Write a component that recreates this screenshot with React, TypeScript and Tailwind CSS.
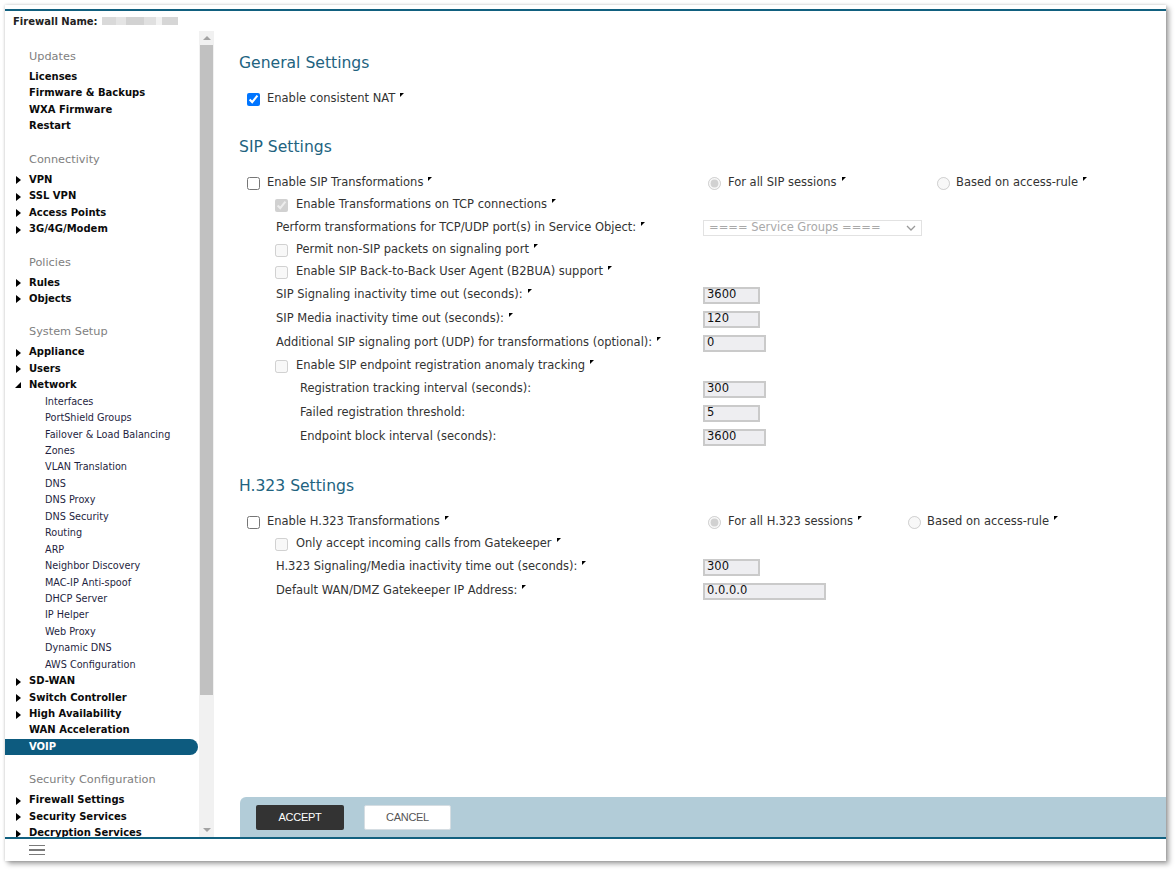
import React from 'react';

type NavItem = {
  label: string;
  arrow?: 'right' | 'down';
  sub?: boolean;
  active?: boolean;
};

type NavSection = {
  title: string;
  items: NavItem[];
};

const nav: NavSection[] = [
  {
    title: 'Updates',
    items: [
      { label: 'Licenses' },
      { label: 'Firmware & Backups' },
      { label: 'WXA Firmware' },
      { label: 'Restart' },
    ],
  },
  {
    title: 'Connectivity',
    items: [
      { label: 'VPN', arrow: 'right' },
      { label: 'SSL VPN', arrow: 'right' },
      { label: 'Access Points', arrow: 'right' },
      { label: '3G/4G/Modem', arrow: 'right' },
    ],
  },
  {
    title: 'Policies',
    items: [
      { label: 'Rules', arrow: 'right' },
      { label: 'Objects', arrow: 'right' },
    ],
  },
  {
    title: 'System Setup',
    items: [
      { label: 'Appliance', arrow: 'right' },
      { label: 'Users', arrow: 'right' },
      { label: 'Network', arrow: 'down' },
      { label: 'Interfaces', sub: true },
      { label: 'PortShield Groups', sub: true },
      { label: 'Failover & Load Balancing', sub: true },
      { label: 'Zones', sub: true },
      { label: 'VLAN Translation', sub: true },
      { label: 'DNS', sub: true },
      { label: 'DNS Proxy', sub: true },
      { label: 'DNS Security', sub: true },
      { label: 'Routing', sub: true },
      { label: 'ARP', sub: true },
      { label: 'Neighbor Discovery', sub: true },
      { label: 'MAC-IP Anti-spoof', sub: true },
      { label: 'DHCP Server', sub: true },
      { label: 'IP Helper', sub: true },
      { label: 'Web Proxy', sub: true },
      { label: 'Dynamic DNS', sub: true },
      { label: 'AWS Configuration', sub: true },
      { label: 'SD-WAN', arrow: 'right' },
      { label: 'Switch Controller', arrow: 'right' },
      { label: 'High Availability', arrow: 'right' },
      { label: 'WAN Acceleration' },
      { label: 'VOIP', active: true },
    ],
  },
  {
    title: 'Security Configuration',
    items: [
      { label: 'Firewall Settings', arrow: 'right' },
      { label: 'Security Services', arrow: 'right' },
      { label: 'Decryption Services', arrow: 'right' },
    ],
  },
];

const Tip = () => (
  <span className="inline-block ml-[5px] w-0 h-0 border-t-[4px] border-r-[4px] border-t-black border-r-transparent -translate-y-[4px]" />
);

const Field = ({ value, width }: { value: string; width: string }) => (
  <div className={`${width} h-[17px] border-2 border-[#cacaca] bg-[#eeeef1] flex items-center pl-[2px] text-[#111]`}>
    {value}
  </div>
);

const rowHeights = {
  sm: 'flex items-center h-[22px]',
  md: 'flex items-center h-[23px]',
  lg: 'flex items-center h-[24px]',
};

const Row = ({
  size = 'sm',
  left,
  right,
}: {
  size?: 'sm' | 'md' | 'lg';
  left: React.ReactNode;
  right?: React.ReactNode;
}) => (
  <div className={rowHeights[size]}>
    <div className="w-[464px] flex items-center whitespace-nowrap">{left}</div>
    <div className="flex items-center whitespace-nowrap">{right}</div>
  </div>
);

const SectionTitle = ({ children, first }: { children: React.ReactNode; first?: boolean }) => (
  <h2 className={`${first ? '' : 'mt-[27px]'} mb-[15px] h-[20px] leading-[20px] text-[15.6px] text-[#22637f]`}>{children}</h2>
);

const Sidebar = () => (
  <div className="w-[194px] overflow-hidden pt-[1px]">
    {nav.map((section) => (
      <div key={section.title}>
        <div className="h-[37px] pt-[16px] pl-[24px] leading-[17px] text-[11.3px] text-[#808080]">{section.title}</div>
        {section.items.map((item) => (
          <div
            key={item.label}
            className={
              item.active
                ? 'relative h-[16.45px] leading-[16.45px] w-[193px] rounded-r-[9px] bg-[#0d5b7f] pl-[24px] text-[10px] font-bold text-white'
                : item.sub
                ? 'relative h-[16.45px] leading-[16.45px] pl-[40px] text-[9.7px] text-[#1f1f3f]'
                : 'relative h-[16.45px] leading-[16.45px] pl-[24px] text-[10px] font-bold text-[#0b0b0b]'
            }
          >
            {item.arrow === 'right' && (
              <span className="absolute left-[11px] top-[4.5px] w-0 h-0 border-y-[4px] border-y-transparent border-l-[5px] border-l-black" />
            )}
            {item.arrow === 'down' && (
              <span className="absolute left-[10px] top-[5px] w-0 h-0 border-b-[6px] border-l-[6px] border-l-transparent border-b-black" />
            )}
            {item.label}
          </div>
        ))}
      </div>
    ))}
  </div>
);

const Scrollbar = () => (
  <div className="w-[15px] bg-[#f1f1f1] flex flex-col">
    <div className="h-[14px] flex items-center justify-center">
      <span className="w-0 h-0 border-x-[4px] border-x-transparent border-b-[4px] border-b-[#a3a3a3]" />
    </div>
    <div className="h-[650px] mx-[1px] bg-[#c1c1c1]" />
    <div className="flex-1" />
    <div className="h-[14px] flex items-center justify-center">
      <span className="w-0 h-0 border-x-[4px] border-x-transparent border-t-[4px] border-t-[#a3a3a3]" />
    </div>
  </div>
);

const Check = ({ checked, disabled }: { checked?: boolean; disabled?: boolean }) => (
  <input type="checkbox" className="w-[13px] h-[13px] shrink-0" defaultChecked={checked} disabled={disabled} />
);

const Radios = ({ name, label, firstWidth }: { name: string; label: string; firstWidth: string }) => (
  <div className="flex items-center pl-[5px]">
    <div className={`${firstWidth} flex items-center`}>
      <input type="radio" name={name} className="w-[13px] h-[13px]" defaultChecked disabled />
      <span className="ml-[7px]">{label}</span>
      <Tip />
    </div>
    <input type="radio" name={name} className="w-[13px] h-[13px]" disabled />
    <span className="ml-[6px]">Based on access-rule</span>
    <Tip />
  </div>
);

const Settings = () => (
  <div className="flex-1 pl-[25px] pt-[22px] text-[11.5px] text-[#333]">
    <SectionTitle first>General Settings</SectionTitle>
    <Row
      left={
        <div className="flex items-center pl-[8px]">
          <Check checked />
          <span className="ml-[7px]">Enable consistent NAT</span>
          <Tip />
        </div>
      }
    />

    <SectionTitle>SIP Settings</SectionTitle>
    <Row
      left={
        <div className="flex items-center pl-[8px]">
          <Check />
          <span className="ml-[7px]">Enable SIP Transformations</span>
          <Tip />
        </div>
      }
      right={<Radios name="sip" label="For all SIP sessions" firstWidth="w-[229px]" />}
    />
    <Row
      left={
        <div className="flex items-center pl-[36px]">
          <Check checked disabled />
          <span className="ml-[8px]">Enable Transformations on TCP connections</span>
          <Tip />
        </div>
      }
    />
    <Row
      size="md"
      left={
        <div className="flex items-center pl-[37px]">
          <span>Perform transformations for TCP/UDP port(s) in Service Object:</span>
          <Tip />
        </div>
      }
      right={
        <div className="w-[219px] h-[16px] border border-[#e2e2e2] flex items-center justify-between px-[5px] text-[#a9a9a9]">
          <span>==== Service Groups ====</span>
          <svg width="10" height="6" viewBox="0 0 10 6" fill="none" stroke="#9a9a9a" strokeWidth="1.3">
            <path d="M1 1l4 4 4-4" />
          </svg>
        </div>
      }
    />
    <Row
      left={
        <div className="flex items-center pl-[36px]">
          <Check disabled />
          <span className="ml-[8px]">Permit non-SIP packets on signaling port</span>
          <Tip />
        </div>
      }
    />
    <Row
      left={
        <div className="flex items-center pl-[36px]">
          <Check disabled />
          <span className="ml-[8px]">Enable SIP Back-to-Back User Agent (B2BUA) support</span>
          <Tip />
        </div>
      }
    />
    <Row
      size="lg"
      left={
        <div className="flex items-center pl-[37px]">
          <span>SIP Signaling inactivity time out (seconds):</span>
          <Tip />
        </div>
      }
      right={<Field value="3600" width="w-[57px]" />}
    />
    <Row
      size="lg"
      left={
        <div className="flex items-center pl-[37px]">
          <span>SIP Media inactivity time out (seconds):</span>
          <Tip />
        </div>
      }
      right={<Field value="120" width="w-[57px]" />}
    />
    <Row
      size="lg"
      left={
        <div className="flex items-center pl-[37px]">
          <span>Additional SIP signaling port (UDP) for transformations (optional):</span>
          <Tip />
        </div>
      }
      right={<Field value="0" width="w-[63px]" />}
    />
    <Row
      left={
        <div className="flex items-center pl-[36px]">
          <Check disabled />
          <span className="ml-[8px]">Enable SIP endpoint registration anomaly tracking</span>
          <Tip />
        </div>
      }
    />
    <Row
      size="lg"
      left={<span className="pl-[61px]">Registration tracking interval (seconds):</span>}
      right={<Field value="300" width="w-[63px]" />}
    />
    <Row
      size="lg"
      left={<span className="pl-[61px]">Failed registration threshold:</span>}
      right={<Field value="5" width="w-[57px]" />}
    />
    <Row
      size="lg"
      left={<span className="pl-[61px]">Endpoint block interval (seconds):</span>}
      right={<Field value="3600" width="w-[63px]" />}
    />

    <SectionTitle>H.323 Settings</SectionTitle>
    <Row
      left={
        <div className="flex items-center pl-[8px]">
          <Check />
          <span className="ml-[7px]">Enable H.323 Transformations</span>
          <Tip />
        </div>
      }
      right={<Radios name="h323" label="For all H.323 sessions" firstWidth="w-[200px]" />}
    />
    <Row
      left={
        <div className="flex items-center pl-[36px]">
          <Check disabled />
          <span className="ml-[8px]">Only accept incoming calls from Gatekeeper</span>
          <Tip />
        </div>
      }
    />
    <Row
      size="lg"
      left={
        <div className="flex items-center pl-[37px]">
          <span>H.323 Signaling/Media inactivity time out (seconds):</span>
          <Tip />
        </div>
      }
      right={<Field value="300" width="w-[57px]" />}
    />
    <Row
      size="lg"
      left={
        <div className="flex items-center pl-[37px]">
          <span>Default WAN/DMZ Gatekeeper IP Address:</span>
          <Tip />
        </div>
      }
      right={<Field value="0.0.0.0" width="w-[123px]" />}
    />
  </div>
);

const ActionBar = () => (
  <div className="ml-[26px] h-[40px] shrink-0 rounded-tl-[6px] bg-[#b2ccd8] flex items-center pl-[16px] gap-[20px] font-['Liberation_Sans',Arial,sans-serif] text-[11px] tracking-[-0.3px]">
    <button className="w-[88px] h-[25px] rounded-[2px] bg-[#333333] text-white">ACCEPT</button>
    <button className="w-[87px] h-[25px] rounded-[2px] bg-white border border-[#d5dde2] text-[#555]">CANCEL</button>
  </div>
);

export default function App() {
  return (
    <div className="w-[1175px] h-[870px] bg-white pt-[5px] pl-[5px] font-['DejaVu_Sans',Verdana,sans-serif]">
      <div className="w-[1161px] h-[856px] bg-white flex flex-col shadow-[0_0_3px_rgba(0,0,0,0.2),3px_3px_5px_rgba(0,0,0,0.35)]">
        <div className="h-[4px] shrink-0" />
        <div className="h-[2px] shrink-0 bg-[#11607f]" />
        <div className="h-[20px] shrink-0 flex items-center pl-[8px] text-[10px] font-bold text-[#222]">
          <span>Firewall Name:</span>
          <span className="ml-[4px] flex h-[8px] blur-[0.6px]">
            <span className="w-[14px] bg-[#d9d9d9]" />
            <span className="w-[10px] bg-[#e4e4e4]" />
            <span className="w-[18px] bg-[#d2d2d2]" />
            <span className="w-[12px] bg-[#e0e0e0]" />
            <span className="w-[6px] bg-[#f2f2f2]" />
            <span className="w-[16px] bg-[#d6d6d6]" />
          </span>
        </div>
        <div className="h-[806px] flex shrink-0">
          <Sidebar />
          <Scrollbar />
          <div className="flex-1 flex flex-col">
            <Settings />
            <ActionBar />
          </div>
        </div>
        <div className="h-[2px] shrink-0 bg-[#11607f]" />
        <div className="flex-1 flex items-center pl-[24px]">
          <div className="flex flex-col gap-[3px]">
            <span className="w-[16px] h-[1.5px] bg-[#7a7a7a]" />
            <span className="w-[16px] h-[1.5px] bg-[#7a7a7a]" />
            <span className="w-[16px] h-[1.5px] bg-[#7a7a7a]" />
          </div>
        </div>
      </div>
    </div>
  );
}
